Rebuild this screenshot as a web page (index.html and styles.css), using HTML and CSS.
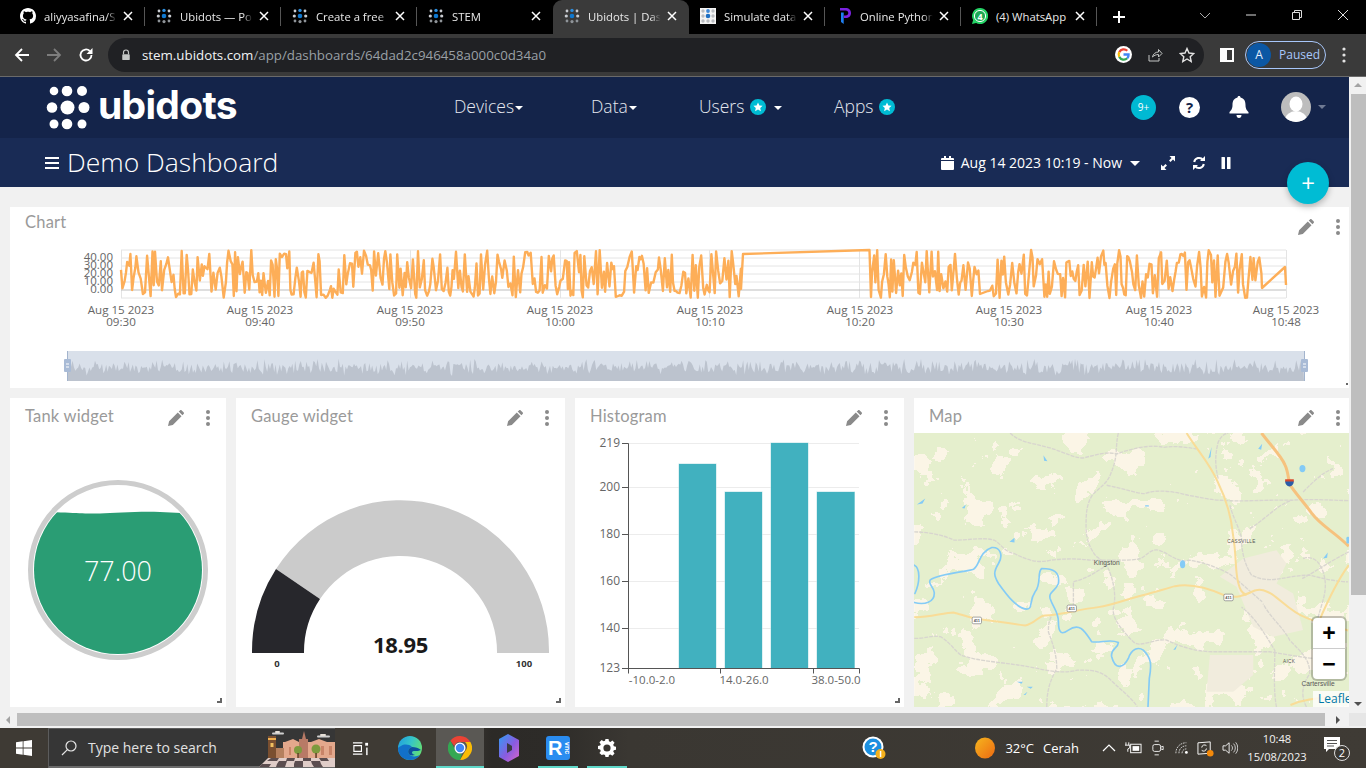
FILE: index.html
```html
<!DOCTYPE html>
<html lang="en">
<head>
<meta charset="utf-8">
<title>Ubidots | Dashboard</title>
<link rel="stylesheet" href="styles.css">
</head>
<body>
<svg class="defs" width="0" height="0" aria-hidden="true">
  <defs>
    <symbol id="i-github" viewBox="0 0 16 16"><path fill="#fff" d="M8 0C3.58 0 0 3.58 0 8c0 3.54 2.29 6.53 5.47 7.59.4.07.55-.17.55-.38 0-.19-.01-.82-.01-1.49-2.01.37-2.53-.49-2.69-.94-.09-.23-.48-.94-.82-1.13-.28-.15-.68-.52-.01-.53.63-.01 1.08.58 1.23.82.72 1.21 1.87.87 2.33.66.07-.52.28-.87.51-1.07-1.78-.2-3.64-.89-3.64-3.95 0-.87.31-1.59.82-2.15-.08-.2-.36-1.02.08-2.12 0 0 .67-.21 2.2.82.64-.18 1.32-.27 2-.27.68 0 1.36.09 2 .27 1.53-1.04 2.2-.82 2.2-.82.44 1.1.16 1.92.08 2.12.51.56.82 1.27.82 2.15 0 3.07-1.87 3.75-3.65 3.95.29.25.54.73.54 1.48 0 1.07-.01 1.93-.01 2.2 0 .21.15.46.55.38A8.013 8.013 0 0016 8c0-4.42-3.58-8-8-8z"/></symbol>
    <symbol id="i-ubi" viewBox="0 0 16 16">
      <g fill="#c9ccd1"><circle cx="3" cy="3" r="1.4"/><circle cx="13" cy="3" r="1.4"/><circle cx="2.3" cy="8" r="1.6"/><circle cx="13.7" cy="8" r="1.6"/></g>
      <g fill="#8f9499"><circle cx="3" cy="13" r="1.4"/><circle cx="13" cy="13" r="1.4"/><circle cx="8" cy="13.6" r="1.6"/></g>
      <circle cx="8" cy="2.4" r="1.7" fill="#2d8fe0"/><circle cx="8" cy="8" r="2.3" fill="#0f78cf"/>
    </symbol>
    <symbol id="i-close" viewBox="0 0 12 12"><path d="M2 2l8 8M10 2l-8 8" stroke="#fff" stroke-width="1.5" fill="none"/></symbol>
    <symbol id="i-pencil" viewBox="0 0 16 16"><path fill="#8a8a8a" d="M0 16l1.1-4.8L9.8 2.5l3.7 3.7-8.7 8.7zM10.7 1.6L12 .4c.5-.5 1.2-.5 1.7 0l1.9 1.9c.5.5.5 1.2 0 1.7l-1.2 1.3z"/></symbol>
    <symbol id="i-kebab" viewBox="0 0 4 16"><g fill="#8a8a8a"><circle cx="2" cy="2" r="2"/><circle cx="2" cy="8" r="2"/><circle cx="2" cy="14" r="2"/></g></symbol>
    <symbol id="i-star" viewBox="0 0 16 16"><circle cx="8" cy="8" r="8" fill="#00bcd4"/><path fill="#fff" d="M8 3.4l1.4 3 3.2.4-2.4 2.2.7 3.2L8 10.6l-2.9 1.6.7-3.2-2.4-2.2 3.2-.4z"/></symbol>
  </defs>
</svg>

<div class="screen">
  <header class="tabstrip">
    <div class="tab"><svg class="tab-icon"><use href="#i-github"/></svg><span class="tab-title">aliyyasafina/S</span><svg class="tab-close"><use href="#i-close"/></svg></div>
    <div class="tab"><svg class="tab-icon"><use href="#i-ubi"/></svg><span class="tab-title">Ubidots — Po</span><svg class="tab-close"><use href="#i-close"/></svg></div>
    <div class="tab"><svg class="tab-icon"><use href="#i-ubi"/></svg><span class="tab-title">Create a free</span><svg class="tab-close"><use href="#i-close"/></svg></div>
    <div class="tab tab-plain"><svg class="tab-icon"><use href="#i-ubi"/></svg><span class="tab-title">STEM</span><svg class="tab-close"><use href="#i-close"/></svg></div>
    <div class="tab tab-active"><svg class="tab-icon"><use href="#i-ubi"/></svg><span class="tab-title">Ubidots | Das</span><svg class="tab-close"><use href="#i-close"/></svg></div>
    <div class="tab">
      <svg class="tab-icon" viewBox="0 0 16 16"><rect width="16" height="16" fill="#f4f4f4"/><g fill="#b9bcc0"><circle cx="3" cy="3" r="1.7"/><circle cx="13" cy="3" r="1.7"/><circle cx="3" cy="8" r="1.7"/><circle cx="13" cy="8" r="1.7"/><circle cx="3" cy="13" r="1.7"/><circle cx="8" cy="13" r="1.7"/><circle cx="13" cy="13" r="1.7"/></g><circle cx="8" cy="3" r="1.9" fill="#3f88d6"/><circle cx="8" cy="8" r="2.3" fill="#1e6fc2"/></svg>
      <span class="tab-title">Simulate data</span><svg class="tab-close"><use href="#i-close"/></svg></div>
    <div class="tab">
      <svg class="tab-icon" viewBox="0 0 16 16"><path fill="#7a22e0" d="M4 0h5.5C13 0 15 2 15 5s-2 5-5.5 5H8V7.4h1.600C11.300 7.400 12.300 6.400 12.300 5S11.300 2.600 9.600 2.600H4z"/><path fill="#1f7ef0" d="M5 4.500h2.700V16L5 14z"/></svg>
      <span class="tab-title">Online Python</span><svg class="tab-close"><use href="#i-close"/></svg></div>
    <div class="tab tab-last">
      <svg class="tab-icon" viewBox="0 0 16 16"><path fill="#25d366" d="M8 0a8 8 0 0 0-6.900 12L0 16l4.100-1.100A8 8 0 1 0 8 0z"/><circle cx="8" cy="8" r="5.600" fill="#1fa855" stroke="#fff" stroke-width="1"/><text x="8" y="11.500" class="wa-count">4</text></svg>
      <span class="tab-title">(4) WhatsApp</span><svg class="tab-close"><use href="#i-close"/></svg></div>
    <svg class="new-tab" viewBox="0 0 14 14"><path d="M7 1v12M1 7h12" stroke="#fff" stroke-width="2"/></svg>
    <div class="win-controls">
      <svg class="win-btn" viewBox="0 0 12 12"><path d="M1 4l5 5 5-5" stroke="#aaa" fill="none"/></svg>
      <svg class="win-btn" viewBox="0 0 12 12"><path d="M1 6h10" stroke="#ddd" fill="none"/></svg>
      <svg class="win-btn" viewBox="0 0 12 12"><path d="M1.500 3.500h7v7h-7zM3.500 3.500v-2h7v7h-2" stroke="#ddd" fill="none"/></svg>
      <svg class="win-btn win-btn-last" viewBox="0 0 12 12"><path d="M1 1l10 10M11 1L1 11" stroke="#ddd" fill="none"/></svg>
    </div>
  </header>

  <div class="toolbar">
    <svg class="tool" viewBox="0 0 16 16"><path d="M15 8H2M8 2L2 8l6 6" stroke="#fff" stroke-width="1.800" fill="none"/></svg>
    <svg class="tool" viewBox="0 0 16 16"><path d="M1 8h13M8 2l6 6-6 6" stroke="#7d7d7d" stroke-width="1.800" fill="none"/></svg>
    <svg class="tool" viewBox="0 0 16 16"><path d="M13.500 8A5.500 5.500 0 1 1 11.800 4" stroke="#fff" stroke-width="1.800" fill="none"/><path fill="#fff" d="M14.500 1v6h-6z"/></svg>
    <div class="omnibox">
      <svg class="lock" viewBox="0 0 12 14"><path d="M3 6V4a3 3 0 0 1 6 0v2" stroke="#c4c7c5" stroke-width="1.400" fill="none"/><rect x="1.500" y="6" width="9" height="7" rx="1" fill="#c4c7c5"/></svg>
      <span class="url"><span class="url-host">stem.ubidots.com</span>/app/dashboards/64dad2c946458a000c0d34a0</span>
      <svg class="omni-g" viewBox="0 0 18 18"><circle cx="9" cy="9" r="9" fill="#fff"/><path fill="none" stroke="#ea4335" stroke-width="2.400" d="M13 5a5.500 5.500 0 0 0-8.500 1.500"/><path fill="none" stroke="#fbbc05" stroke-width="2.400" d="M4.500 6.500a5.500 5.500 0 0 0 0 5"/><path fill="none" stroke="#34a853" stroke-width="2.400" d="M4.500 11.500a5.500 5.500 0 0 0 8.500 1.500"/><path fill="none" stroke="#4285f4" stroke-width="2.400" d="M13 13a5.500 5.500 0 0 0 1.400-4H9"/></svg>
      <svg class="omni-icon" viewBox="0 0 16 16"><path d="M2 8v6h10v-3M5.500 10c.5-3 3-5 6-5V2.500L15 6.500 11.500 10V7.500c-2.500 0-4.500 1-6 2.500z" stroke="#c4c7c5" fill="none"/></svg>
      <svg class="omni-icon" viewBox="0 0 16 16"><path d="M8 1.500l2 4.500 4.800.5-3.600 3.200 1 4.800L8 12l-4.200 2.500 1-4.800L1.200 6.500 6 6z" stroke="#e3e3e3" stroke-width="1.400" fill="none"/></svg>
    </div>
    <svg class="side-panel" viewBox="0 0 14 14"><rect x="1" y="1" width="12" height="12" fill="none" stroke="#fff" stroke-width="2"/><rect x="1" y="1" width="6" height="12" fill="#fff"/></svg>
    <div class="profile"><span class="profile-avatar">A</span><span class="profile-text">Paused</span></div>
    <svg class="tool-menu" viewBox="0 0 4 16"><g fill="#e3e3e3"><circle cx="2" cy="2" r="1.600"/><circle cx="2" cy="8" r="1.600"/><circle cx="2" cy="14" r="1.600"/></g></svg>
  </div>

  <div class="viewport">
    <div class="page">
      <nav class="navbar">
        <div class="brand">
          <svg class="brand-dots" viewBox="46 85 44 44">
            <g fill="#fff"><circle cx="54" cy="90" r="4.300"/><circle cx="67" cy="90" r="5.300"/><circle cx="82" cy="90" r="5"/><circle cx="52" cy="106.500" r="5.300"/><circle cx="67.500" cy="106.500" r="7"/><circle cx="84" cy="106.500" r="5.500"/><circle cx="54" cy="123" r="4.500"/><circle cx="67" cy="123" r="5.300"/><circle cx="82" cy="123" r="4.500"/></g>
          </svg>
          <span class="brand-name">ubidots</span>
        </div>
        <ul class="menu">
          <li class="menu-devices">Devices<i class="caret"></i></li>
          <li class="menu-data">Data<i class="caret"></i></li>
          <li class="menu-users">Users<svg class="star"><use href="#i-star"/></svg><i class="caret caret-far"></i></li>
          <li class="menu-apps">Apps<svg class="star"><use href="#i-star"/></svg></li>
        </ul>
        <div class="nav-right">
          <span class="badge-round">9+</span>
          <span class="help-round">?</span>
          <svg class="bell" viewBox="0 0 20 22"><path fill="#fff" d="M10 0c1 0 1.500.7 1.500 1.500C15 2.300 16.500 5 16.500 9c0 4 1.500 5.500 3 7v1.500H.5V16c1.500-1.500 3-3 3-7 0-4 1.500-6.700 5-7.500C8.500.7 9 0 10 0zM7.500 19h5c0 1.700-1 3-2.500 3s-2.500-1.300-2.500-3z"/></svg>
          <svg class="avatar" viewBox="0 0 30 30"><clipPath id="avatar-clip"><circle cx="15" cy="15" r="15"/></clipPath><g clip-path="url(#avatar-clip)"><rect width="30" height="30" fill="#bdbdbd"/><ellipse cx="15" cy="12" rx="6.500" ry="7.500" fill="#fff"/><ellipse cx="15" cy="28" rx="11" ry="9" fill="#fff"/></g></svg>
          <i class="caret caret-dim"></i>
        </div>
      </nav>

      <div class="subbar">
        <div class="subbar-title">
          <span class="hamburger"><i></i><i></i><i></i></span>
          <h1>Demo Dashboard</h1>
        </div>
        <div class="subbar-tools">
          <svg class="cal" viewBox="0 0 13 14"><path fill="#fff" d="M0 5h13v8a1 1 0 0 1-1 1H1a1 1 0 0 1-1-1zM1 2h2V0h2v2h3V0h2v2h2a1 1 0 0 1 1 1v1H0V3a1 1 0 0 1 1-1z"/></svg>
          <span class="range">Aug 14 2023 10:19 - Now</span>
          <i class="caret caret-wide"></i>
          <svg class="sub-ico sub-expand" viewBox="0 0 14 14"><path fill="#fff" d="M8.500 0H14v5.500l-2-2L9.500 6 8 4.500 10.500 2zM5.500 14H0V8.500l2 2L4.500 8 6 9.500 3.500 12z"/></svg>
          <svg class="sub-ico sub-refresh" viewBox="0 0 14 14"><path d="M2.200 6A5 5 0 0 1 11 3.800M11.800 8A5 5 0 0 1 3 10.200" stroke="#fff" stroke-width="2" fill="none"/><path fill="#fff" d="M13 0v5H8zM1 14V9h5z"/></svg>
          <svg class="sub-ico sub-pause" viewBox="0 0 10 12"><rect x="0.500" width="3.500" height="12" rx=".6" fill="#fff"/><rect x="6" width="3.500" height="12" rx=".6" fill="#fff"/></svg>
        </div>
      </div>

      <main class="content">
        <section class="card card-chart card-edge">
          <div class="card-head head-chart">
            <span class="card-title">Chart</span>
            <svg class="act-pencil"><use href="#i-pencil"/></svg>
            <svg class="act-kebab"><use href="#i-kebab"/></svg>
          </div>
          <svg class="chart-svg" viewBox="10 243 1339 145">
            <g class="grid-h">
              <line x1="121" x2="1286" y1="250" y2="250"/><line x1="121" x2="1286" y1="258" y2="258"/><line x1="121" x2="1286" y1="266" y2="266"/><line x1="121" x2="1286" y1="274" y2="274"/><line x1="121" x2="1286" y1="282" y2="282"/><line x1="121" x2="1286" y1="298" y2="298"/>
            </g>
            <g class="grid-v">
              <line x1="121.500" x2="121.500" y1="250" y2="298"/><line x1="410.500" x2="410.500" y1="250" y2="298"/><line x1="560.500" x2="560.500" y1="250" y2="298"/><line x1="709.500" x2="709.500" y1="250" y2="298"/><line x1="859.500" x2="859.500" y1="250" y2="298"/><line x1="1159.500" x2="1159.500" y1="250" y2="298"/><line x1="1286.500" x2="1286.500" y1="250" y2="298"/>
            </g>
            <line class="grid-zero" x1="121" x2="1286" y1="290" y2="290"/>
            <polyline id="series" class="series" points=""/>
            <g class="ylabels">
              <text x="113" y="261">40.00</text><text x="113" y="269">30.00</text><text x="113" y="277">20.00</text><text x="113" y="285">10.00</text><text x="113" y="293">0.00</text>
            </g>
            <g class="xlabels">
              <text x="121" y="314">Aug 15 2023</text><text x="121" y="326">09:30</text>
              <text x="260" y="314">Aug 15 2023</text><text x="260" y="326">09:40</text>
              <text x="410" y="314">Aug 15 2023</text><text x="410" y="326">09:50</text>
              <text x="560" y="314">Aug 15 2023</text><text x="560" y="326">10:00</text>
              <text x="710" y="314">Aug 15 2023</text><text x="710" y="326">10:10</text>
              <text x="860" y="314">Aug 15 2023</text><text x="860" y="326">10:20</text>
              <text x="1009" y="314">Aug 15 2023</text><text x="1009" y="326">10:30</text>
              <text x="1159" y="314">Aug 15 2023</text><text x="1159" y="326">10:40</text>
              <text x="1286" y="314">Aug 15 2023</text><text x="1286" y="326">10:48</text>
            </g>
            <rect class="nav-band" x="67" y="351" width="1237" height="30"/>
            <polygon id="navigator" class="nav-area" points=""/>
            <line class="nav-edge" x1="67.500" x2="67.500" y1="351" y2="381"/>
            <line class="nav-edge" x1="1304.500" x2="1304.500" y1="351" y2="381"/>
            <g class="nav-handle"><rect x="64" y="359" width="7" height="13" rx="1"/><path d="M66 364h3M66 367h3"/></g>
            <g class="nav-handle"><rect x="1301" y="359" width="7" height="13" rx="1"/><path d="M1303 364h3M1303 367h3"/></g>
          </svg>
          <i class="resize-dot"></i>
        </section>

        <div class="widgets">
          <section class="card card-tank">
            <div class="card-head"><span class="card-title">Tank widget</span><svg class="act-pencil"><use href="#i-pencil"/></svg><svg class="act-kebab"><use href="#i-kebab"/></svg></div>
            <svg class="widget-svg" viewBox="10 433 216 274">
              <clipPath id="tank-clip"><circle cx="118" cy="570" r="84"/></clipPath>
              <circle class="tank-ring" cx="118" cy="570" r="87.500"/>
              <path class="tank-water" clip-path="url(#tank-clip)" d="M20 511.500C70 512 85 514 100 513.500S140 511 160 512s40 2 60 1V670H20z"/>
              <text class="tank-value" x="118" y="581">77.00</text>
            </svg>
            <i class="resize"></i>
          </section>

          <section class="card card-gauge">
            <div class="card-head"><span class="card-title">Gauge widget</span><svg class="act-pencil"><use href="#i-pencil"/></svg><svg class="act-kebab"><use href="#i-kebab"/></svg></div>
            <svg class="widget-svg" viewBox="236 433 329 274">
              <path class="gauge-rest" d="M276 569A148.500 151 0 0 1 549 653H497A96.500 96 0 0 0 320 599Z"/>
              <path class="gauge-value" d="M252 653A148.500 151 0 0 1 276 569L320 599A96.500 96 0 0 0 304 653Z"/>
              <text class="gauge-number" x="400.500" y="653">18.95</text>
              <text class="gauge-limit" x="277" y="667">0</text>
              <text class="gauge-limit" x="524" y="667">100</text>
            </svg>
            <i class="resize"></i>
          </section>

          <section class="card card-hist">
            <div class="card-head"><span class="card-title">Histogram</span><svg class="act-pencil"><use href="#i-pencil"/></svg><svg class="act-kebab"><use href="#i-kebab"/></svg></div>
            <svg class="widget-svg" viewBox="575 433 329 274">
              <g class="hist-grid"><line x1="628" x2="859" y1="443.500" y2="443.500"/><line x1="628" x2="859" y1="487.500" y2="487.500"/><line x1="628" x2="859" y1="534.500" y2="534.500"/><line x1="628" x2="859" y1="581.500" y2="581.500"/><line x1="628" x2="859" y1="628.500" y2="628.500"/></g>
              <g class="hist-bars"><rect x="679" y="464" width="37" height="204"/><rect x="725" y="492" width="37" height="176"/><rect x="771" y="443" width="37" height="225"/><rect x="817" y="492" width="37.500" height="176"/></g>
              <path class="hist-axis" d="M622 443.500h6.500V668.500M622 487.500h6M622 534.500h6M622 581.500h6M622 628.500h6M622 668.500h237.500v5M628.500 668.500v5M720.500 668.500v5M813.500 668.500v5"/>
              <g class="hist-y"><text x="620" y="447">219</text><text x="620" y="491">200</text><text x="620" y="538">180</text><text x="620" y="585">160</text><text x="620" y="632">140</text><text x="620" y="672">123</text></g>
              <g class="hist-x"><text x="652" y="684">-10.0-2.0</text><text x="744" y="684">14.0-26.0</text><text x="836" y="684">38.0-50.0</text></g>
            </svg>
            <i class="resize"></i>
          </section>

          <section class="card card-map card-edge">
            <div class="card-head"><span class="card-title">Map</span><svg class="act-pencil"><use href="#i-pencil"/></svg><svg class="act-kebab"><use href="#i-kebab"/></svg></div>
            <div class="map">
              <svg class="map-svg" viewBox="12 113 1305 823">
                <filter id="patches" x="0" y="0" width="100%" height="100%" color-interpolation-filters="sRGB">
                  <feTurbulence type="fractalNoise" baseFrequency="0.013" numOctaves="5" seed="11"/>
                  <feColorMatrix type="matrix" values="0 0 0 0 0.898  0 0 0 0 0.937  0 0 0 0 0.804  1.5 0 0 0 0"/>
                  <feComponentTransfer><feFuncA type="discrete" tableValues="0 0 0 0 0 0 0 1 1 1 1 1"/></feComponentTransfer>
                  <feGaussianBlur stdDeviation="1.500"/>
                </filter>
                <rect x="12" y="113" width="1305" height="823" fill="#fbf5e6"/>
                <rect x="12" y="113" width="1305" height="823" filter="url(#patches)"/>
                <g class="map-urban">
                  <path d="M1000 490l100-25 30 40-30 60 50 30 30 110-90 20-60-30-50-120-50-30z"/>
                  <path d="M900 780h130v60l-60 50H890z"/>
                </g>
                <g class="map-minor">
                  <path d="M300 113c30 30 70 30 120 45s70 30 100 30c40-10 70-20 100-12 40-15 100-30 140-20 40-5 70 0 100 5"/>
                  <path d="M625 113c-10 40 0 70-22 120-10 30-30 40-55 65-20 30-20 60-20 100 0 30 10 60 30 85l30 22"/>
                  <path d="M590 270c50 10 90 25 115 25 40-15 90-5 130 5 30 5 70 15 100 15 60 5 130-2 210 0 60-5 110 0 280 5"/>
                  <path d="M12 410c40 0 90 10 120 25 40 0 90-10 120 0 20 10 30 35 60 40 40 20 70 30 110 20 40-5 80-5 120 0h80c30 0 50 0 70-5 20-10 30-30 55-25 30 10 60 40 90 30 40 5 80 20 120 40 40 30 70 60 100 85"/>
                  <path d="M1020 400c50-30 80-70 125-85M960 330c10 40 30 70 35 100 0 30 5 70 30 110 60 30 100 0 175 0 40 10 80 20 115 20"/>
                  <path d="M490 650v-90c40-10 70-30 100-50 20 40 30 90 20 130-5 30 30 70 60 100 20 20 60-10 100-5 40 20 90 35 140 35h170c60 10 140 25 160 20"/>
                  <path d="M12 730c40 0 50-10 80-5 30 20 40 40 60 55 50 20 130 20 230 40 40 10 90 15 120 5 40 0 70 0 100 30 30 30 60 50 80 80"/>
                  <path d="M410 936c0-50 10-80 30-115 0-40-10-70-25-110 0-20 0-30 10-50M1100 936c-10-50-5-120-5-170-30-50-60-100-100-130M1190 936c-20-40-10-70 10-100 0-40-20-60-60-100-20-40-60-70-80-110"/>
                  <path d="M1180 490c30-10 50 10 60 40 20 60-10 100-20 160M1317 470c-60 30-100 60-140 80M925 250c-10-40-10-70 0-110 10-20 20-25 30-27M1180 290c30-30 60-60 90-70"/>
                </g>
                <g class="map-highway">
                  <path d="M12 666c40 2 90-14 118-14 25 6 60 20 90 22 40 5 90 12 125 17 30-5 40-30 60-30 40 0 100-18 160-25 40-5 90-25 130-35 40-10 70-20 100-28 50-10 110 10 150 28 40 10 60-2 90-15 20-5 30 0 50 10 30 20 60 55 100 70 30 15 80 25 130 40"/>
                  <path d="M830 113c30 50 70 90 95 150 25 50 40 110 45 160 10 60 5 100 15 140 5 20 10 30 25 37"/>
                  <path d="M1317 510c-30 40-60 100-90 170M1317 900c-60 10-120 5-175 30"/>
                </g>
                <g class="map-interstate"><path d="M1055 113c30 40 60 70 70 95 10 20 10 40 15 60 20 30 40 50 65 85 30 40 60 50 112 100"/></g>
                <g class="map-river">
                  <path d="M12 510c18 8 18 50 2 85M12 622c30 8 62 0 60-30-2-20-20-24-12-38 30-20 110-24 130-32 20-12 15-52 55-65 25-2 35 23 20 48-15 25-15 35 0 60 25 35 55 75 85 77 20-2 5-22 25-52 20-25 5-60 20-70 35 0 55 10 50 45-10 25-30 25-25 45 10 30 25 40 25 70 0 35 10 40 30 25 35-25 50 5 70 35 25 5 55-10 80 2 0 18-25 18-20 43 10 40 35 35 50 5 10-30 30-35 45-25 25 25 25 45 18 85l-4 86"/>
                </g>
                <g class="map-lake">
                  <ellipse cx="818" cy="507" rx="8" ry="12"/><ellipse cx="1178" cy="220" rx="9" ry="11"/><path d="M895 190l10-35-3 30zM1045 160l12-15-3 18zM20 328l25-18-8 15zM298 440l15-12v14zM155 338l12-10-4 12zM400 180l12 18-10-2zM790 765l12-16-5 14zM1240 490l14-18-2 16zM320 860h18l-4 6zM350 875h18l-6 6zM340 900l12-10-6 10z"/><rect x="705" y="330" width="12" height="4" rx="2"/><rect x="1310" y="425" width="10" height="20" rx="4"/>
                </g>
                <g class="map-shield">
                  <rect x="186" y="666" width="28" height="20" rx="4"/><rect x="471" y="630" width="28" height="20" rx="4"/><rect x="942" y="597" width="28" height="20" rx="4"/>
                </g>
                <g class="map-shield-text"><text x="200" y="681">411</text><text x="485" y="645">411</text><text x="956" y="612">411</text></g>
                <path class="map-i-top" d="M1126 252h26v8h-26z"/><path class="map-i" d="M1126 259h26c0 8-5 14-13 15-8-1-13-7-13-15z"/>
                <g class="map-labels">
                  <text x="590" y="510" class="lbl-town">Kingston</text>
                  <text x="995" y="443" class="lbl-small">CASSVILLE</text>
                  <text x="1138" y="803" class="lbl-small">AICK</text>
                  <text x="1225" y="874" class="lbl-town">Cartersville</text>
                </g>
              </svg>
              <div class="zoom-ctl"><span class="zoom-btn">+</span><span class="zoom-btn">−</span></div>
              <span class="attribution">Leaflet</span>
            </div>
          </section>
        </div>
      </main>
    </div>

    <aside class="vscroll">
      <i class="vs-up"></i>
      <i class="vs-thumb"></i>
      <i class="vs-down"></i>
    </aside>
    <button class="fab" type="button">+</button>
  </div>

  <div class="hscroll"><i class="hs-left"></i><i class="hs-thumb"></i><i class="hs-right"></i><i class="hs-corner"></i></div>

  <footer class="taskbar">
    <svg class="start" viewBox="0 0 16 16"><path fill="#fff" d="M0 2.300l6.700-1v6.300H0zM7.500 1.200L16 0v7.600H7.500zM0 8.400h6.700v6.300l-6.700-1zM7.500 8.400H16V16l-8.500-1.200z"/></svg>
    <div class="search">
      <svg class="search-ico" viewBox="0 0 16 16"><circle cx="10" cy="6" r="5" stroke="#e6e6e6" fill="none" stroke-width="1.200"/><path d="M6.400 9.600L1 15" stroke="#e6e6e6" stroke-width="1.200"/></svg>
      <span class="search-text">Type here to search</span>
      <svg class="search-art" viewBox="0 0 76 38">
        <path fill="#e0cdc8" d="M0 38L9 29h67v9z"/>
        <g fill="#5b4d4f"><path d="M12 29h8l-2 3H8zM28 29h8l-1 3h-8zM44 29h8v3h-8zM60 29h8l2 3h-8zM3 35h9l-2 3H0zM20 32h8l-1 3h-9zM36 32h8v3h-9zM52 32h9l1 3h-9zM18 35h9l-1 3h-9zM35 35h9v3h-9zM53 35h9l2 3h-9z"/></g>
        <rect x="24" y="13" width="52" height="16" fill="#e3a88c"/>
        <path fill="#e3a88c" d="M26 13l8-3 6 3zM52 13l8-3 8 3z"/>
        <path fill="#b87a66" d="M45 2l2 8h2v19h-9V10h3z"/>
        <rect x="16" y="19" width="9" height="10" fill="#b5805e"/>
        <rect x="9" y="7" width="8" height="22" fill="#7a4f30"/><rect x="9" y="9" width="8" height="2" fill="#f0b050"/><rect x="11.500" y="14" width="3" height="4" fill="#f0c060"/>
        <g fill="#c98468"><rect x="30" y="18" width="2" height="8"/><rect x="62" y="17" width="3" height="9"/><rect x="70" y="17" width="3" height="9"/></g>
        <circle cx="39" cy="21" r="4" fill="#7d9a3e"/><rect x="38.300" y="24" width="1.500" height="5" fill="#5a3c24"/>
        <circle cx="57" cy="20" r="4.500" fill="#7d9a3e"/><rect x="56.300" y="24" width="1.500" height="5" fill="#5a3c24"/>
        <rect x="13" y="3.500" width="12" height="2" rx="1" fill="#cfcfcf"/><rect x="16" y="2" width="5" height="2" rx="1" fill="#e6e0d8"/>
        <rect x="58" y="6.500" width="13" height="2" rx="1" fill="#cfcfcf"/><rect x="61" y="5" width="6" height="2" rx="1" fill="#e6e0d8"/>
      </svg>
    </div>
    <svg class="tb-ico tb-taskview" viewBox="0 0 18 18"><path d="M1 3h10M1 15h10M2 6h8v6H2z" stroke="#fff" fill="none" stroke-width="1.200"/><rect x="14" y="3" width="3" height="3" fill="#fff"/><rect x="15" y="8" width="1.500" height="8" fill="#fff"/></svg>
    <svg class="tb-ico tb-edge" viewBox="0 0 24 24"><defs><linearGradient id="edge-g" x1="0" y1="0" x2="1" y2=".4"><stop offset="0" stop-color="#1f9be0"/><stop offset=".55" stop-color="#35c4c9"/><stop offset="1" stop-color="#5fdc7c"/></linearGradient></defs><circle cx="12" cy="12" r="12" fill="url(#edge-g)"/><path fill="#1270c9" d="M0 12c0 7 5 12 12 12 4 0 8-2 10-5-4 2-9 2-11-1-2-3 0-6 3-7-3-3-8-3-11-1-1.500 1-2.500 1-3 2z"/><path fill="#0d4f9e" d="M11 18c-2-3 0-6 3-7 3 0 7 1 9 3-1 .5-3 1-5 1-2-.1-4 0-4 1.500 0 1 1 2 3 2.500-3 .8-5 .5-6-1z"/></svg>
    <div class="tb-active"><svg class="tb-chrome" viewBox="0 0 24 24"><path fill="#ea4335" d="M12 0a12 12 0 0 1 10.400 6H12a6 6 0 0 0-5.700 4L2.300 4.800A12 12 0 0 1 12 0z"/><path fill="#fbbc05" d="M22.400 6A12 12 0 0 1 12 24l5.200-9a6 6 0 0 0-.2-9z"/><path fill="#34a853" d="M2.300 4.800L7 13.500A6 6 0 0 0 14 17.700L12 24A12 12 0 0 1 2.300 4.800z"/><circle cx="12" cy="12" r="5.500" fill="#fff"/><circle cx="12" cy="12" r="4.200" fill="#4285f4"/></svg></div>
    <svg class="tb-ico tb-copilot" viewBox="0 0 20 28"><defs><linearGradient id="cop-g" x1="0" y1="0" x2="1" y2="1"><stop offset="0" stop-color="#2f9df4"/><stop offset=".55" stop-color="#8a5be0"/><stop offset="1" stop-color="#d867c9"/></linearGradient></defs><path fill="url(#cop-g)" d="M9 0l11 6v16l-11 6-9-5V5z"/><path fill="#3a3a44" d="M8 9l5 3v4l-5 3z"/></svg>
    <div class="tb-slot tb-slot-rvnc"><div class="tb-rvnc"><span class="rvnc-r">R</span><span class="rvnc-v">vnc</span></div></div>
    <div class="tb-slot tb-slot-gear"><svg class="tb-gear" viewBox="0 0 20 20"><path fill="#fff" fill-rule="evenodd" d="M8.300 0h3.400l.5 2.600 1.600.7 2.200-1.500 2.400 2.400-1.500 2.200.7 1.600 2.400.5v3.400l-2.400.5-.7 1.600 1.500 2.200-2.400 2.400-2.200-1.500-1.600.7-.5 2.200H8.300l-.5-2.200-1.600-.7L4 17.900l-2.400-2.400 1.500-2.200-.7-1.600L0 11.200V7.800l2.400-.5.700-1.600L1.600 3.500 4 1.100l2.200 1.500 1.600-.7zM10 6a4 4 0 1 0 0 8 4 4 0 0 0 0-8z"/></svg></div>
    <div class="tb-spacer"></div>
    <svg class="tb-help" viewBox="0 0 24 24"><circle cx="11" cy="11" r="10.500" fill="#fff"/><circle cx="11" cy="11" r="8.500" fill="#1b8fe0"/><text x="11" y="16" class="tb-help-q">?</text><circle cx="18.500" cy="18" r="5" fill="#f4b01c"/><rect x="17.800" y="15" width="1.500" height="6" fill="#fff"/></svg>
    <svg class="tb-sun" viewBox="0 0 20 26"><defs><linearGradient id="sun-g" x1="0" y1="0" x2="1" y2="1"><stop offset="0" stop-color="#f5b61e"/><stop offset="1" stop-color="#ee6a12"/></linearGradient></defs><ellipse cx="10" cy="13" rx="10" ry="10.500" fill="url(#sun-g)"/></svg>
    <span class="weather">32°C</span><span class="weather weather-word">Cerah</span>
    <div class="tray">
      <svg class="tray-ico tray-chev" viewBox="0 0 14 14"><path d="M1 10l6-6 6 6" stroke="#fff" fill="none" stroke-width="1.200"/></svg>
      <svg class="tray-ico tray-bat" viewBox="0 0 18 14"><rect x="6" y="3" width="11" height="9" fill="none" stroke="#fff"/><rect x="8" y="5" width="7" height="5" fill="#fff"/><path d="M1 1v3M4 1v3M0 4h5v3l-2 1v3" stroke="#fff" fill="none"/></svg>
      <svg class="tray-ico tray-cam" viewBox="0 0 14 18"><rect x="1" y="5" width="9" height="8" rx="2" fill="none" stroke="#fff"/><path d="M10 8l3-1v4l-3-1M3 1h5M3 17h5" stroke="#fff" fill="none"/></svg>
      <svg class="tray-ico tray-wifi" viewBox="0 0 16 16"><path d="M1 14C1 7 6 2 13 2M4.500 14C4.500 9 8 5.500 13 5.500M8 14c0-3 2-5 5-5" stroke="#ddd" fill="none" stroke-dasharray="2 1"/><circle cx="13" cy="13" r="1.600" fill="#fff"/></svg>
      <svg class="tray-ico tray-sec" viewBox="0 0 18 18"><path d="M1 3l13-1v12L1 15z" fill="none" stroke="#fff"/><path d="M5 8a3 3 0 0 1 5-2M10 9a3 3 0 0 1-5 2" stroke="#fff" fill="none"/><circle cx="14" cy="14" r="3.500" fill="#f58a0b"/></svg>
      <svg class="tray-ico tray-vol" viewBox="0 0 18 16"><path d="M1 5.500h3L8 2v12L4 10.500H1z" fill="none" stroke="#fff"/><path d="M10.500 5a4 4 0 0 1 0 6M13 3a7 7 0 0 1 0 10M15.500 1.500a10 10 0 0 1 0 13" stroke="#ddd" fill="none"/></svg>
    </div>
    <div class="clock"><span>10:48</span><span>15/08/2023</span></div>
    <div class="notif">
      <svg class="notif-ico" viewBox="0 0 16 16"><path fill="#fff" d="M0 0h16v12H5l-3 3v-3H0z"/><path d="M3 3.500h10M3 6.500h10M3 9h7" stroke="#555"/></svg>
      <span class="notif-count">2</span>
    </div>
  </footer>
</div>
<script src="script.js"></script>
</body>
</html>
```

FILE: styles.css
```css
* { box-sizing: border-box; }
html, body { margin: 0; padding: 0; height: 100%; overflow: hidden; }
body { font-family: "Open Sans", "Noto Sans", sans-serif; background: #000; }
.defs { position: absolute; }
i { font-style: normal; display: block; }
svg { display: block; flex: none; }

.screen { width: 1366px; height: 768px; display: flex; flex-direction: column; background: #f1f1f1; overflow: hidden; }

/* tabs */
.tabstrip { height: 34px; flex: none; background: #000; display: flex; align-items: center; padding-left: 9px; }
.tab { width: 136px; height: 34px; display: flex; align-items: center; padding: 0 10px 2px 11px; color: #e8e8e8; font-size: 11.300px; position: relative; }
.tab::after { content: ""; position: absolute; right: 0; top: 7px; height: 19px; width: 1px; background: #565656; }
.tab-plain::after { display: none; }
.tab-active { background: #3a3a3a; border-radius: 9px 9px 0 0; }
.tab-active::after { display: none; }
.tab-icon { width: 16px; height: 16px; }
.tab-title { width: 75px; margin-left: 8px; white-space: nowrap; overflow: hidden; -webkit-mask-image: linear-gradient(to right, #000 84%, transparent 97%); mask-image: linear-gradient(to right, #000 84%, transparent 97%); }
.tab-last .tab-title { -webkit-mask-image: none; mask-image: none; }
.tab-close { width: 12px; height: 12px; margin-left: auto; margin-right: 1px; }
.wa-count { font: 700 9px "Open Sans", sans-serif; fill: #fff; text-anchor: middle; }
.new-tab { width: 14px; height: 14px; margin-left: 15px; }
.win-controls { margin-left: auto; display: flex; align-items: center; gap: 34px; padding-right: 17px; padding-bottom: 5px; }
.win-btn { width: 12px; height: 12px; }

/* toolbar */
.toolbar { height: 43px; flex: none; background: #3a3a3a; border-bottom: 1px solid #6a6a6a; display: flex; align-items: center; padding: 0 0 1px 14px; }
.tool { width: 16px; height: 16px; margin-right: 16px; }
.omnibox { width: 1096px; height: 34px; margin-left: -2px; border-radius: 17px; background: #202124; display: flex; align-items: center; padding-left: 13px; }
.lock { width: 10px; height: 12px; }
.url { margin-left: 11px; color: #9aa0a6; font-size: 13.300px; white-space: nowrap; }
.url-host { color: #f1f3f4; }
.omni-g { width: 17px; height: 17px; margin-left: auto; margin-right: 15px; }
.omni-icon { width: 16px; height: 16px; margin-right: 16px; }
.omni-icon:last-child { margin-right: 9px; }
.side-panel { width: 14px; height: 14px; margin-left: 16px; }
.profile { width: 81px; height: 28px; margin-left: 11px; border: 1px solid #a8c7fa; border-radius: 14px; display: flex; align-items: center; padding-left: 1px; }
.profile-avatar { width: 24px; height: 24px; border-radius: 50%; background: #0b57a4; color: #e6eefb; font-size: 12px; display: flex; align-items: center; justify-content: center; }
.profile-text { margin-left: 8px; color: #a8c7fa; font-size: 12px; }
.tool-menu { width: 4px; height: 16px; margin-left: 16px; }

/* viewport */
.viewport { height: 636px; flex: none; display: flex; position: relative; background: #f1f1f1; }
.page { width: 1349px; flex: none; display: flex; flex-direction: column; }

.navbar { height: 61px; flex: none; background: #14244a; display: flex; align-items: center; color: #fff; }
.brand { display: flex; align-items: center; margin-left: 46px; width: 191px; }
.brand-dots { width: 44px; height: 44px; }
.brand-name { margin-left: 8px; margin-top: -5px; font: 700 39px/44px Inter, "Liberation Sans", sans-serif; letter-spacing: -.7px; color: #fff; }
.menu { list-style: none; margin: -3px 0 0 217px; padding: 0; display: flex; font-size: 17.500px; font-weight: 300; color: #e6e9f0; }
.menu li { display: flex; align-items: center; white-space: nowrap; }
.menu-devices { width: 137px; }
.menu-data { width: 108px; }
.menu-users { width: 135px; }
.caret { width: 0; height: 0; border-left: 4px solid transparent; border-right: 4px solid transparent; border-top: 4px solid #fff; margin-left: 1px; margin-top: 3px; }
.caret-far { margin-left: 8px; }
.star { width: 16px; height: 16px; margin-left: 5px; margin-top: 2px; }
.menu-users .star { margin-left: 6px; }
.nav-right { margin-left: auto; display: flex; align-items: center; padding-right: 23px; margin-top: -1px; }
.badge-round { width: 25px; height: 25px; border-radius: 50%; background: #00b9d3; font-size: 10px; color: #fff; display: flex; align-items: center; justify-content: center; }
.help-round { width: 21px; height: 21px; margin-left: 23px; border-radius: 50%; background: #fff; color: #14244a; font-size: 15px; font-weight: 700; display: flex; align-items: center; justify-content: center; }
.bell { width: 20px; height: 22px; margin-left: 29px; }
.avatar { width: 30px; height: 30px; margin-left: 32px; }
.caret-dim { border-top-color: #6f7a93; margin: 0 0 0 7px; }

.subbar { height: 49px; flex: none; background: #192b55; display: flex; align-items: center; justify-content: space-between; padding: 0 118px 0 45px; color: #fff; }
.subbar-title { display: flex; align-items: center; }
.hamburger { width: 14px; display: flex; flex-direction: column; gap: 3px; }
.hamburger i { height: 2px; background: #fff; }
.subbar-title h1 { margin: 0 0 0 8px; font-size: 26.500px; font-weight: 300; line-height: 1; white-space: nowrap; }
.subbar-tools { display: flex; align-items: center; }
.cal { width: 13px; height: 14px; margin-right: 7px; }
.range { font-size: 14px; white-space: nowrap; }
.caret-wide { border-left-width: 5px; border-right-width: 5px; border-top-width: 5px; margin: 2px 0 0 8px; }
.sub-ico { width: 14px; height: 14px; }
.sub-expand { margin-left: 21px; }
.sub-refresh { margin-left: 17px; }
.sub-pause { width: 10px; height: 12px; margin-left: 15px; }

.content { flex: 1; padding: 20px 0 0 10px; display: flex; flex-direction: column; gap: 10px; }
.card { background: #fff; position: relative; display: flex; flex-direction: column; }
.card-chart { height: 181px; }
.widgets { display: flex; gap: 10px; height: 309px; }
.card-tank { width: 216px; }
.card-gauge, .card-hist { width: 329px; }
.card-map { width: 435px; }
.card-head { height: 35px; flex: none; display: flex; padding: 8px 16px 0 15px; }
.head-chart { height: 36px; padding-top: 5px; }
.card-edge .card-head { padding-right: 9px; }
.card-title { font: 400 16.500px/20px Lato, "Open Sans", sans-serif; color: #9a9a9a; margin-right: auto; letter-spacing: .2px; }
.act-pencil { width: 16px; height: 16px; margin-top: 4px; }
.act-kebab { width: 4px; height: 16px; margin: 4px 0 0 22px; }
.head-chart .act-pencil, .head-chart .act-kebab { margin-top: 7px; }
.chart-svg, .widget-svg { flex: 1; width: 100%; min-height: 0; }

.grid-h line, .grid-v line { stroke: #e4e4e4; stroke-width: 1; }
.grid-zero { stroke: #bdbdbd; stroke-width: 1; }
.series { fill: none; stroke: #fdae58; stroke-width: 2.400; stroke-linejoin: round; }
.ylabels text { font: 11.500px "Open Sans", sans-serif; fill: #666; text-anchor: end; }
.xlabels text { font: 11.600px "Open Sans", sans-serif; fill: #666; text-anchor: middle; }
.nav-band { fill: #d9e0ea; }
.nav-area { fill: #bcc3ce; }
.nav-edge { stroke: #a3b4cd; }
.nav-handle rect { fill: #a9bbd6; }
.nav-handle path { stroke: #fff; fill: none; }
.resize { position: absolute; right: 4px; bottom: 4px; width: 5px; height: 5px; border-right: 2px solid #666; border-bottom: 2px solid #666; }
.resize-dot { position: absolute; right: 1px; bottom: 3px; width: 2px; height: 2px; background: #666; }

.tank-ring { fill: #fff; stroke: #cdcdcd; stroke-width: 5; }
.tank-water { fill: #2a9d74; }
.tank-value { font: 300 27px "Open Sans", sans-serif; fill: #fff; text-anchor: middle; }
.gauge-rest { fill: #cbcbcb; }
.gauge-value { fill: #27272c; }
.gauge-number { font: 700 22px "Open Sans", sans-serif; fill: #1a1a1a; text-anchor: middle; letter-spacing: -.3px; }
.gauge-limit { font: 700 9.500px "Open Sans", sans-serif; fill: #333; text-anchor: middle; }

.hist-grid line { stroke: #ececec; }
.hist-bars rect { fill: #41b1bf; stroke: #bfe4e8; stroke-width: 1; paint-order: stroke; }
.hist-axis { fill: none; stroke: #555; stroke-width: 1; }
.hist-y text { font: 12px "Open Sans", sans-serif; fill: #666; text-anchor: end; }
.hist-x text { font: 11.500px "Open Sans", sans-serif; fill: #666; text-anchor: middle; }

.map { flex: 1; position: relative; overflow: hidden; min-height: 0; }
.map-svg { width: 435px; height: 274px; }
.map-urban path { fill: #f1ecdd; }
.map-minor path { fill: none; stroke: #d8d5cf; stroke-width: 4; stroke-dasharray: 12 3; }
.map-highway path { fill: none; stroke: #f9dc97; stroke-width: 6; }
.map-interstate path { fill: none; stroke: #f6c27e; stroke-width: 9; }
.map-river path { fill: none; stroke: #84cbf6; stroke-width: 5; stroke-linecap: round; }
.map-lake > * { fill: #84cbf6; }
.map-shield rect { fill: #fff; stroke: #777; stroke-width: 2; }
.map-shield-text text { font: 700 12px "Liberation Sans", sans-serif; fill: #555; text-anchor: middle; }
.map-i { fill: #2a5ca8; }
.map-i-top { fill: #d8472b; }
.map-labels text { text-anchor: middle; fill: #555; font-family: "Liberation Sans", sans-serif; }
.lbl-town { font-size: 20px; }
.lbl-small { font-size: 14px; letter-spacing: 1px; }
.zoom-ctl { position: absolute; right: 4px; top: 185px; width: 32px; height: 61px; background: #fff; border-radius: 4px; box-shadow: 0 0 0 2px rgba(0,0,0,.22); display: flex; flex-direction: column; }
.zoom-btn { flex: 1; display: flex; align-items: center; justify-content: center; font: 700 23px/1 "Liberation Sans", sans-serif; color: #000; }
.zoom-btn:first-child { border-bottom: 1px solid #ccc; }
.attribution { position: absolute; right: 0; bottom: 0; width: 36px; height: 16px; padding-left: 5px; background: rgba(255,255,255,.8); color: #0078a8; font: 12px/16px "Open Sans", sans-serif; overflow: hidden; white-space: nowrap; }

/* scrollbars */
.vscroll { width: 17px; flex: none; display: flex; flex-direction: column; align-items: flex-end; background: #f1f1f1; position: relative; }
.vs-up { width: 17px; height: 17px; flex: none; position: relative; background: #f1f1f1; }
.vs-up::after { content: ""; position: absolute; left: 5px; top: 6px; border-left: 4px solid transparent; border-right: 4px solid transparent; border-bottom: 4px solid #a3a3a3; }
.vs-thumb { width: 15px; height: 501px; background: #bebebe; flex: none; }
.vs-down { margin-top: auto; width: 17px; height: 17px; position: relative; }
.vs-down::after { content: ""; position: absolute; left: 5px; top: 6px; border-left: 4px solid transparent; border-right: 4px solid transparent; border-top: 4px solid #505050; }
.fab { position: absolute; left: 1287px; top: 85px; width: 42px; height: 42px; padding: 0; border: 0; border-radius: 50%; background: #00bcd4; color: #fff; font: 400 24px/40px "Open Sans", sans-serif; box-shadow: 0 3px 6px rgba(0,0,0,.25); }

.hscroll { height: 13px; flex: none; display: flex; background: #f1f1f1; }
.hs-left { width: 17px; flex: none; position: relative; }
.hs-left::after { content: ""; position: absolute; left: 6px; top: 3px; border-top: 4px solid transparent; border-bottom: 4px solid transparent; border-right: 4px solid #a3a3a3; }
.hs-thumb { width: 1308px; flex: none; background: #bebebe; }
.hs-right { width: 24px; flex: none; position: relative; background: #f1f1f1; }
.hs-right::after { content: ""; position: absolute; left: 11px; top: 3px; border-top: 4px solid transparent; border-bottom: 4px solid transparent; border-left: 4px solid #505050; }
.hs-corner { flex: 1; background: #e6e6e6; }

/* taskbar */
.taskbar { height: 40px; margin-top: 2px; flex: none; background: linear-gradient(to right, #3e3a34 0, #3e3a34 34%, #2c2a27 36%, #2d2b28 40%, #3a3732 46%, #3f3b35 100%); display: flex; align-items: center; color: #fff; }
.start { width: 16px; height: 16px; margin-left: 16px; }
.search { width: 287px; height: 40px; margin-left: 16px; background: #363636; border: 1px solid #5c5c5c; border-bottom: 2px solid #6b6b6b; border-right: 0; display: flex; align-items: center; flex: none; position: relative; }
.search-ico { width: 16px; height: 16px; margin-left: 12px; }
.search-text { margin-left: 11px; font-size: 14px; color: #e2e2e2; white-space: nowrap; }
.search-art { width: 76px; height: 38px; margin-left: auto; }
.tb-ico { flex: none; }
.tb-taskview { width: 17px; height: 17px; margin-left: 17px; }
.tb-edge { width: 24px; height: 24px; margin-left: 29px; }
.tb-active { width: 48px; height: 40px; margin-left: 14px; background: #5a5854; border-bottom: 2px solid #5fd8c9; display: flex; align-items: center; justify-content: center; padding-top: 2px; }
.tb-chrome { width: 24px; height: 24px; }
.tb-copilot { width: 20px; height: 28px; margin-left: 15px; }
.tb-slot { width: 40px; height: 40px; border-bottom: 2px solid #5fd8c9; display: flex; align-items: center; justify-content: center; padding-top: 2px; flex: none; }
.tb-slot-rvnc { margin-left: 19px; }
.tb-slot-gear { margin-left: 9px; }
.tb-rvnc { width: 24px; height: 24px; background: #2a8cf0; border-radius: 3px; display: flex; align-items: center; }
.rvnc-r { font: 700 20px/24px "Liberation Sans", sans-serif; margin-left: 2px; }
.rvnc-v { font: 700 7px/8px "Liberation Sans", sans-serif; writing-mode: vertical-rl; margin-left: 1px; }
.tb-gear { width: 18px; height: 18px; }
.tb-spacer { flex: 1; }
.tb-help { width: 24px; height: 24px; margin-right: 89px; }
.tb-help-q { font: 700 15px "Liberation Sans", sans-serif; fill: #fff; text-anchor: middle; }
.tb-sun { width: 20px; height: 26px; margin-right: 10px; }
.weather { font-size: 13px; white-space: nowrap; }
.weather-word { margin-left: 9px; }
.tray { display: flex; align-items: center; margin-left: 23px; }
.tray-ico { flex: none; }
.tray-chev { width: 14px; height: 14px; }
.tray-bat { width: 17px; height: 14px; margin-left: 9px; }
.tray-cam { width: 12px; height: 18px; margin-left: 10px; }
.tray-wifi { width: 14px; height: 14px; margin-left: 11px; }
.tray-sec { width: 17px; height: 17px; margin-left: 8px; }
.tray-vol { width: 16px; height: 14px; margin-left: 8px; }
.clock { width: 62px; margin-left: 8px; display: flex; flex-direction: column; align-items: center; font-size: 11.200px; line-height: 18px; white-space: nowrap; color: #f2f2f2; }
.notif { margin-left: 16px; margin-right: 16px; width: 26px; height: 26px; position: relative; }
.notif-ico { width: 16px; height: 16px; margin-top: 2px; }
.notif-count { position: absolute; right: 0; bottom: 0; width: 16px; height: 16px; border-radius: 50%; border: 1px solid #ddd; background: #3b3833; font-size: 11px; line-height: 14px; text-align: center; }
```

FILE: script.js
```js
// Deterministic sample data for the chart and its navigator.
(function () {
  var seed = 20230815;
  function rnd() {
    seed = (seed * 1664525 + 1013904223) >>> 0;
    return seed / 4294967296;
  }
  function sample() {
    var r = rnd();
    if (r < 0.25) return 290 + rnd() * 8;
    if (r < 0.42) return 250 + rnd() * 8;
    return 258 + rnd() * 32;
  }
  function run(from, to, pts) {
    for (var x = from; x < to; x += 1.1 + rnd() * 1.3) {
      pts.push(x.toFixed(1) + "," + sample().toFixed(1));
    }
  }
  var pts = [];
  run(121, 741, pts);
  pts.push("741,289", "743,254", "869.5,250", "871,297");
  run(872, 979, pts);
  pts.push("980,294", "988,291");
  run(990, 1262, pts);
  pts.push("1262,288", "1285,267", "1286,285");
  document.getElementById("series").setAttribute("points", pts.join(" "));

  var nav = ["67,381"];
  for (var n = 67; n <= 1304; n += 1.4) {
    var top = 358 + rnd() * 9 + rnd() * 9;
    nav.push(n.toFixed(1) + "," + top.toFixed(1));
  }
  nav.push("1304,381");
  document.getElementById("navigator").setAttribute("points", nav.join(" "));
})();
```
